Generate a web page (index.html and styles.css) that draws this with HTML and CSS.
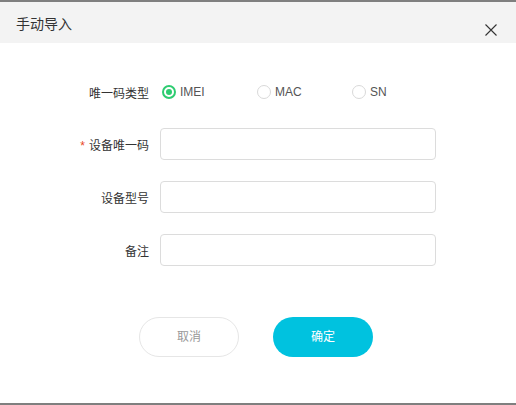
FILE: index.html
```html
<!DOCTYPE html>
<html lang="zh">
<head>
<meta charset="utf-8">
<link rel="stylesheet" href="styles.css">
</head>
<body>
<div class="dialog">
  <div class="header">
    <span class="title">手动导入</span>
    <span class="close">
      <svg width="12" height="12" viewBox="0 0 12 12"><path d="M0.5 0.5L11.5 11.5M11.5 0.5L0.5 11.5" stroke="#333" stroke-width="1.1" fill="none"/></svg>
    </span>
  </div>
  <form class="form">
    <div class="row row-type">
      <label class="label">唯一码类型</label>
      <div class="radios">
        <span class="radio checked"><i class="dot"></i>IMEI</span>
        <span class="radio"><i class="dot"></i>MAC</span>
        <span class="radio"><i class="dot"></i>SN</span>
      </div>
    </div>
    <div class="row">
      <label class="label"><em class="req">*</em>设备唯一码</label>
      <input class="input" type="text">
    </div>
    <div class="row">
      <label class="label">设备型号</label>
      <input class="input" type="text">
    </div>
    <div class="row">
      <label class="label">备注</label>
      <input class="input" type="text">
    </div>
  </form>
  <div class="footer">
    <button class="btn cancel" type="button">取消</button>
    <button class="btn ok" type="button">确定</button>
  </div>
</div>
</body>
</html>
```

FILE: styles.css
```css
html, body {
  margin: 0;
  padding: 0;
  background: #fff;
}
.dialog {
  width: 516px;
  height: 405px;
  box-sizing: border-box;
  border-top: 2px solid #7f7f7f;
  border-bottom: 2px solid #7f7f7f;
  font-family: "Liberation Sans", "Noto Sans CJK SC", sans-serif;
  color: #333;
  display: flex;
  flex-direction: column;
}
.header {
  height: 41px;
  background: #f3f3f3;
  display: flex;
  align-items: center;
  justify-content: space-between;
  padding: 0 19px 0 16px;
}
.title {
  font-size: 14px;
  color: #333;
  margin-top: 1px;
}
.close {
  display: flex;
  margin-top: 14px;
}
.form {
  margin: 0;
  padding-top: 32px;
  display: flex;
  flex-direction: column;
  gap: 21px;
}
.row {
  display: grid;
  grid-template-columns: 149px 276px;
  column-gap: 11px;
  align-items: center;
  height: 32px;
}
.row-type {
  margin: 1px 0 -1px;
}
.label {
  font-size: 12px;
  text-align: right;
  color: #333;
}
.req {
  font-style: normal;
  color: #e8461e;
  margin-right: 4px;
  font-size: 12px;
}
.radios {
  display: flex;
  margin-left: 2px;
}
.radio {
  flex: 0 0 95px;
  width: 95px;
  display: flex;
  align-items: center;
  font-size: 12px;
  color: #555;
}
.dot {
  width: 14px;
  height: 14px;
  box-sizing: border-box;
  border: 1px solid #d9d9d9;
  border-radius: 50%;
  margin-right: 4px;
  display: flex;
  align-items: center;
  justify-content: center;
}
.radio.checked .dot {
  border: 2px solid #2ecc71;
}
.radio.checked .dot::after {
  content: "";
  width: 6px;
  height: 6px;
  border-radius: 50%;
  background: #2ecc71;
}
.input {
  height: 32px;
  box-sizing: border-box;
  border: 1px solid #dcdcdc;
  border-radius: 4px;
  background: #fff;
  margin: 0;
  padding: 0 8px;
  outline: none;
}
.footer {
  display: flex;
  gap: 34px;
  padding-left: 139px;
  margin-top: 51px;
}
.btn {
  width: 100px;
  height: 40px;
  border-radius: 20px;
  font-family: "Liberation Sans", "Noto Sans CJK SC", sans-serif;
  font-size: 12px;
  padding: 0 0 3px;
  cursor: pointer;
}
.cancel {
  background: #fff;
  border: 1px solid #e6e6e6;
  color: #999;
}
.ok {
  background: #00c2df;
  border: none;
  color: #fff;
}
```
